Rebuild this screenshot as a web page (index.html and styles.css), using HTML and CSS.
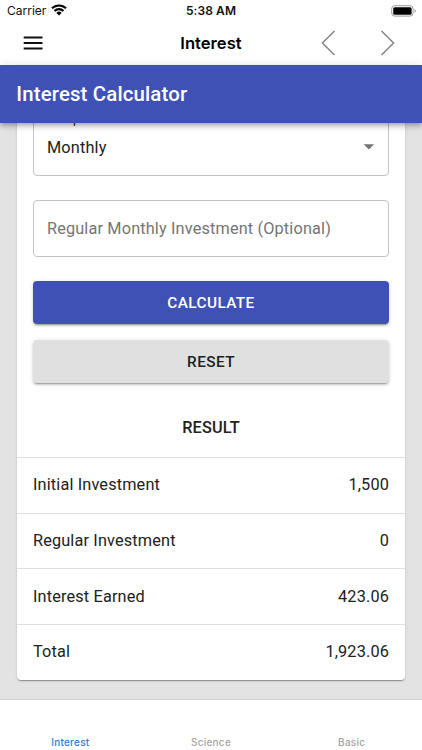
FILE: index.html
```html
<!DOCTYPE html>
<html lang="en">
<head>
<meta charset="utf-8">
<title>Interest Calculator</title>
<link rel="stylesheet" href="styles.css">
</head>
<body>
<div class="status">
  <div class="carrier"><span>Carrier</span>
    <svg class="wifi" width="16" height="12" viewBox="0 0 16 12" fill="none" stroke="#000" stroke-width="2.1"><path d="M1 4.3a10.1 10.1 0 0 1 14 0M3.5 7a6.4 6.4 0 0 1 9 0"/><path d="M8 11.6 5.4 8.9a3.7 3.7 0 0 1 5.2 0z" fill="#000" stroke="none"/></svg>
  </div>
  <div class="time">5:38 AM</div>
  <div class="battery-wrap">
    <svg width="26" height="12" viewBox="0 0 26 12"><rect x=".7" y=".7" width="21.4" height="10.4" rx="3" fill="#fff" stroke="#999"/><rect x="2.2" y="2.2" width="18.4" height="7.6" rx="1.6"/><path d="M23.6 4.2c1.5.5 1.5 3 0 3.5z" fill="#888"/></svg>
  </div>
</div>
<nav class="nav">
  <svg class="menu" width="20" height="14" viewBox="0 0 20 14"><path d="M0.7 1.5h18.8M.7 7h18.8M.7 12.5h18.8" stroke="#111" stroke-width="1.8"/></svg>
  <h2>Interest</h2>
  <div class="arrows">
    <svg width="15" height="26" viewBox="0 0 15 26"><path d="M13.5 1 1.4 13l12.1 12" fill="none" stroke="#858585" stroke-width="1.5"/></svg>
    <svg width="15" height="26" viewBox="0 0 15 26"><path d="m1.5 1 12.1 12L1.5 25" fill="none" stroke="#858585" stroke-width="1.5"/></svg>
  </div>
</nav>
<header class="appbar"><h1>Interest Calculator</h1></header>
<main class="content">
  <section class="card">
    <div class="field select"><span class="label">Compound</span><span>Monthly</span>
      <svg width="12" height="6" viewBox="0 0 12 6"><path d="M.7.3h10.4L5.9 5.5z" fill="#757575"/></svg>
    </div>
    <div class="field input">Regular Monthly Investment (Optional)</div>
    <button class="btn primary">CALCULATE</button>
    <button class="btn">RESET</button>
    <h3>RESULT</h3>
    <div class="row"><span>Initial Investment</span><span>1,500</span></div>
    <div class="row"><span>Regular Investment</span><span>0</span></div>
    <div class="row"><span>Interest Earned</span><span>423.06</span></div>
    <div class="row"><span>Total</span><span>1,923.06</span></div>
  </section>
</main>
<footer class="tabs"><span class="active">Interest</span><span>Science</span><span>Basic</span></footer>
</body>
</html>
```
FILE: styles.css
```css
* { box-sizing: border-box; }
body {
  margin: 0;
  width: 422px;
  height: 750px;
  overflow: hidden;
  display: flex;
  flex-direction: column;
  background: #fff;
  font-family: Roboto, sans-serif;
  color: #212121;
}
h1, h2, h3 { margin: 0; font-weight: 500; }
.status {
  height: 21px;
  flex: none;
  display: grid;
  grid-template-columns: 1fr 1fr 1fr;
  align-items: center;
  font-family: Inter, sans-serif;
  font-size: 12px;
  color: #111;
}
.carrier { display: flex; align-items: center; gap: 5px; padding-left: 7px; letter-spacing: 0; }
.wifi { margin-top: -2px; }
.time { text-align: center; font-weight: 600; letter-spacing: 0.1px; }
.battery-wrap { display: flex; justify-content: flex-end; padding-right: 5px; }
.nav {
  height: 44.4px;
  flex: none;
  display: grid;
  grid-template-columns: 1fr auto 1fr;
  align-items: center;
  padding: 0 27px 0 23px;
}
.nav h2 { font-family: Inter, sans-serif; font-size: 16.6px; font-weight: 600; color: #000; letter-spacing: 0; padding-left: 4px; }
.arrows { display: flex; justify-content: flex-end; gap: 44px; }
.appbar {
  height: 57.3px;
  flex: none;
  display: flex;
  align-items: center;
  padding-left: 16.3px;
  background: #3f51b5;
  color: #fff;
  position: relative;
  z-index: 1;
  box-shadow: 0 2px 4px -1px rgba(0,0,0,.2), 0 4px 5px rgba(0,0,0,.14), 0 1px 10px rgba(0,0,0,.12);
}
.appbar h1 { font-size: 20.4px; letter-spacing: 0.15px; }
.content {
  flex: 1;
  min-height: 0;
  overflow: hidden;
  padding: 0 16.6px;
  background: #e3e3e3;
}
.card {
  margin-top: -22.1px;
  padding-top: 18px;
  height: 579px;
  display: flex;
  flex-direction: column;
  background: #fff;
  border-radius: 4px;
  box-shadow: 0 2px 1px -1px rgba(0,0,0,.2), 0 1px 1px rgba(0,0,0,.14), 0 1px 3px rgba(0,0,0,.12);
}
.field {
  flex: none;
  height: 57px;
  margin: 0 16.4px 24.4px;
  padding: 0 13px;
  display: flex;
  align-items: center;
  justify-content: space-between;
  border: 1px solid #c4c4c4;
  border-radius: 4px;
  font-size: 16.3px;
  letter-spacing: 0.15px;
}
.select { position: relative; }
.label {
  position: absolute;
  top: -8px;
  left: 8px;
  padding: 0 5px;
  background: #fff;
  font-size: 12.2px;
}
.input { color: #757575; }
.btn {
  flex: none;
  height: 42.8px;
  margin: 0 16.4px 16.3px;
  padding: 0;
  border: 0;
  border-radius: 4px;
  background: #e0e0e0;
  color: #212121;
  font: 500 15.3px Roboto, sans-serif;
  letter-spacing: 0.43px;
  box-shadow: 0 3px 1px -2px rgba(0,0,0,.2), 0 2px 2px rgba(0,0,0,.14), 0 1px 5px rgba(0,0,0,.12);
}
.primary { background: #3f51b5; color: #fff; }
h3 {
  flex: 1;
  display: flex;
  align-items: center;
  justify-content: center;
  padding-bottom: 1px;
  font-size: 16.3px;
  letter-spacing: 0.15px;
}
.row {
  flex: none;
  height: 55.7px;
  padding: 0 16.4px 1px;
  display: flex;
  align-items: center;
  justify-content: space-between;
  border-top: 1px solid #e0e0e0;
  font-size: 16.3px;
  letter-spacing: 0.15px;
}
.tabs {
  flex: none;
  height: 51px;
  display: grid;
  grid-template-columns: repeat(3, 1fr);
  align-items: end;
  padding-bottom: 2px;
  border-top: 1px solid #cfcfcf;
  text-align: center;
  font-family: Inter, sans-serif;
  font-size: 10px;
  font-weight: 500;
  letter-spacing: 0.25px;
  color: #a5a5a5;
}
.active { color: #2f7cd6; }
```
